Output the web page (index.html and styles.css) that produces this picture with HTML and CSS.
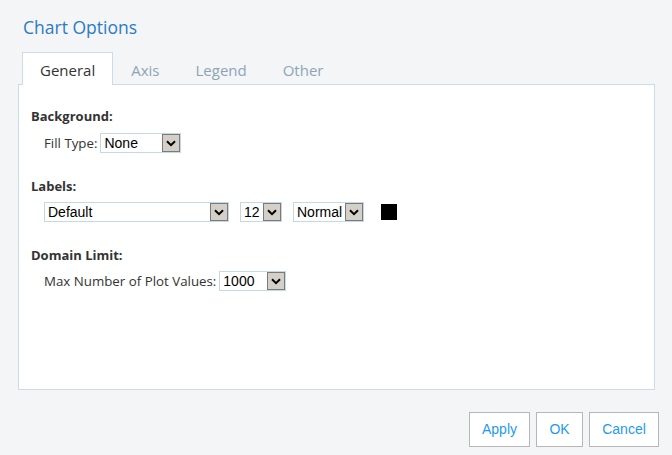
FILE: index.html
```html
<!DOCTYPE html>
<html>
<head>
<meta charset="utf-8">
<link rel="stylesheet" href="styles.css">
</head>
<body>
<div class="dialog">
  <h1 class="title">Chart Options</h1>
  <div class="tabs">
    <div class="tab active">General</div>
    <div class="tab">Axis</div>
    <div class="tab">Legend</div>
    <div class="tab">Other</div>
  </div>
  <div class="panel">
    <div class="section first">
      <div class="heading">Background:</div>
      <div class="row">
        <span class="label">Fill Type:</span>
        <div class="select w-fill"><span class="val">None</span><span class="arrow"><svg width="10" height="7" viewBox="0 0 10 7"><path d="M1 1.2 L5 5.2 L9 1.2" fill="none" stroke="#000" stroke-width="2"/></svg></span></div>
      </div>
    </div>
    <div class="section">
      <div class="heading">Labels:</div>
      <div class="row">
        <div class="select w-font"><span class="val">Default</span><span class="arrow"><svg width="10" height="7" viewBox="0 0 10 7"><path d="M1 1.2 L5 5.2 L9 1.2" fill="none" stroke="#000" stroke-width="2"/></svg></span></div>
        <div class="select w-size"><span class="val">12</span><span class="arrow"><svg width="10" height="7" viewBox="0 0 10 7"><path d="M1 1.2 L5 5.2 L9 1.2" fill="none" stroke="#000" stroke-width="2"/></svg></span></div>
        <div class="select w-style"><span class="val">Normal</span><span class="arrow"><svg width="10" height="7" viewBox="0 0 10 7"><path d="M1 1.2 L5 5.2 L9 1.2" fill="none" stroke="#000" stroke-width="2"/></svg></span></div>
        <div class="swatch"></div>
      </div>
    </div>
    <div class="section">
      <div class="heading">Domain Limit:</div>
      <div class="row">
        <span class="label">Max Number of Plot Values:</span>
        <div class="select w-max"><span class="val">1000</span><span class="arrow"><svg width="10" height="7" viewBox="0 0 10 7"><path d="M1 1.2 L5 5.2 L9 1.2" fill="none" stroke="#000" stroke-width="2"/></svg></span></div>
      </div>
    </div>
  </div>
  <div class="buttons">
    <button class="btn w-apply">Apply</button>
    <button class="btn w-ok">OK</button>
    <button class="btn w-cancel">Cancel</button>
  </div>
</div>
</body>
</html>
```
FILE: styles.css
```css
html, body {
  margin: 0;
  padding: 0;
  background: #f4f5f7;
}
.dialog {
  width: 672px;
  height: 455px;
  box-sizing: border-box;
  padding: 0 13px 0 18px;
  font-family: "Open Sans", sans-serif;
}
.title {
  margin: 0;
  padding: 15px 0 0 5px;
  height: 38px;
  box-sizing: border-box;
  font-size: 17.5px;
  line-height: 24px;
  font-weight: normal;
  color: #2b7bc4;
}
.tabs {
  display: flex;
  margin-left: 4px;
  margin-top: 14px;
  height: 32px;
  position: relative;
  z-index: 1;
}
.tab {
  padding: 0 17px;
  font-size: 15px;
  line-height: 34px;
  color: #8ca5b6;
  border: 1px solid transparent;
  border-bottom: none;
  height: 33px;
  box-sizing: border-box;
}
.tab.active {
  background: #fff;
  color: #333;
  border-color: #c8dde8;
}
.panel {
  width: 637px;
  height: 306px;
  box-sizing: border-box;
  background: #fff;
  border: 1px solid #c8dde8;
  padding: 0 12px;
}
.section {
  margin-top: 25px;
}
.section.first {
  margin-top: 23px;
}
.heading {
  font-size: 13px;
  font-weight: bold;
  line-height: 16px;
  color: #333;
}
.row {
  display: flex;
  align-items: center;
  margin-top: 8px;
  padding-left: 13px;
  height: 20px;
}
.section.first .row {
  margin-top: 9px;
}
.label {
  font-size: 13.3px;
  color: #333;
  margin-right: 3px;
}
.select {
  height: 20px;
  box-sizing: border-box;
  border: 1px solid #c3d9e6;
  background: #fff;
  display: flex;
  align-items: center;
  justify-content: space-between;
  padding: 0 0 0 3px;
  font-family: "Liberation Sans", Arial, sans-serif;
  font-size: 14px;
  color: #000;
}
.arrow {
  width: 18px;
  height: 18px;
  box-sizing: border-box;
  background: #d4d0c8;
  border: 1px solid #7a7a7a;
  display: flex;
  align-items: center;
  justify-content: center;
}
.w-fill { width: 81px; }
.w-font { width: 185px; margin-right: 11px; }
.w-size { width: 42px; margin-right: 11px; }
.w-style { width: 71px; margin-right: 17px; }
.w-max { width: 67px; }
.swatch {
  width: 16px;
  height: 16px;
  background: #000;
}
.buttons {
  display: flex;
  justify-content: flex-end;
  gap: 6px;
  margin-top: 22px;
}
.btn {
  height: 35px;
  box-sizing: border-box;
  background: #fff;
  border: 1px solid #b7b7b7;
  border-radius: 0;
  font-family: "Liberation Sans", Arial, sans-serif;
  font-size: 14px;
  color: #1f9af0;
  padding: 0 0 1px;
}
.w-apply { width: 61px; }
.w-ok { width: 47px; }
.w-cancel { width: 70px; }
```
